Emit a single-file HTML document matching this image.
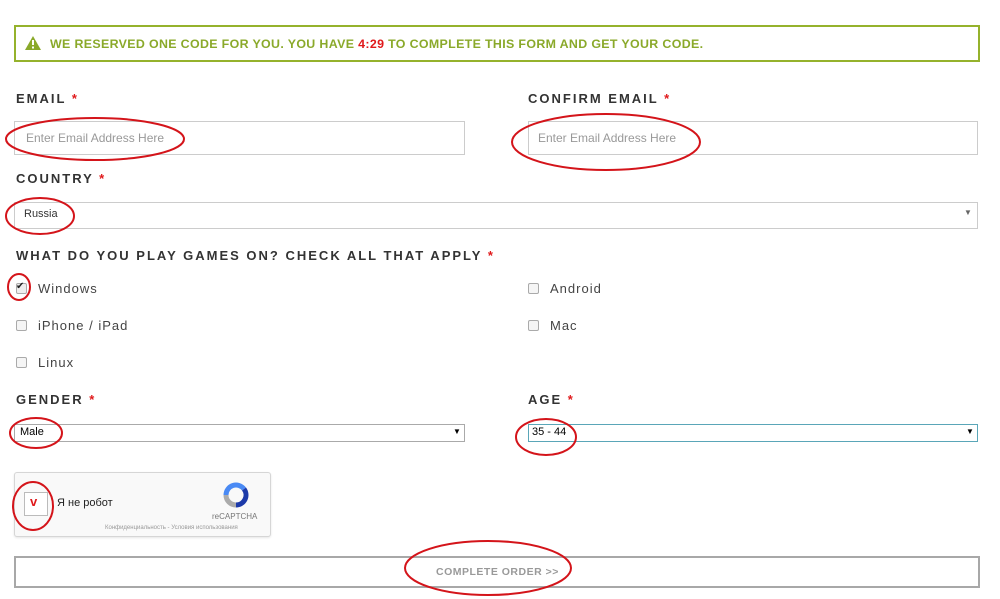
<!DOCTYPE html>
<html><head><meta charset="utf-8"><style>
body{margin:0;width:1000px;height:599px;background:#fff;font-family:"Liberation Sans","Noto Sans CJK SC",sans-serif;position:relative;overflow:hidden}
.a{position:absolute}
.banner{left:14px;top:25px;width:962px;height:33px;border:2px solid #95b22c}
.btext{left:50px;top:37px;font-size:12.4px;font-weight:bold;color:#8aa92a;letter-spacing:.35px}
.lbl{font-size:13px;font-weight:bold;color:#333;letter-spacing:2px}
.lbl span{color:#e0191b}
.inp{border:1px solid #ccc;background:#fff;box-sizing:border-box}
.ph{font-size:12px;color:#999}
.cb{width:9px;height:9px;border:1px solid #aaa;border-radius:2px;background:#f5f5f5}
.cl{font-size:13px;color:#444;letter-spacing:1px}
.sel{border:1px solid #aaa;box-sizing:border-box;font-size:11px;color:#222}
</style></head><body>
<div class="a banner"></div>
<svg class="a" style="left:25px;top:36px" width="16" height="14"><path d="M8 0L16 14H0Z" fill="#8aa92a"/><rect x="7" y="4" width="2" height="5" fill="#fff"/><rect x="7" y="10.5" width="2" height="2" fill="#fff"/></svg>
<div class="a btext">WE RESERVED ONE CODE FOR YOU. YOU HAVE <span style="color:#e0191b">4:29</span> TO COMPLETE THIS FORM AND GET YOUR CODE.</div>

<div class="a lbl" style="left:16px;top:91px">EMAIL <span>*</span></div>
<div class="a lbl" style="left:528px;top:91px">CONFIRM EMAIL <span>*</span></div>
<div class="a inp" style="left:14px;top:121px;width:451px;height:34px"></div>
<div class="a ph" style="left:26px;top:131px">Enter Email Address Here</div>
<div class="a inp" style="left:528px;top:121px;width:450px;height:34px"></div>
<div class="a ph" style="left:538px;top:131px">Enter Email Address Here</div>

<div class="a lbl" style="left:16px;top:171px">COUNTRY <span>*</span></div>
<div class="a inp" style="left:14px;top:202px;width:964px;height:27px"></div>
<div class="a" style="left:24px;top:208px;font-size:11px;color:#333">Russia</div>
<div class="a" style="left:964px;top:208px;font-size:8px;color:#666">▼</div>

<div class="a lbl" style="left:16px;top:248px">WHAT DO YOU PLAY GAMES ON? CHECK ALL THAT APPLY <span>*</span></div>
<div class="a cb" style="left:16px;top:283px;background:#eee"></div>
<div class="a" style="left:16px;top:281px;font-size:10px;line-height:12px;color:#222">✔</div>
<div class="a cl" style="left:38px;top:281px">Windows</div>
<div class="a cb" style="left:16px;top:320px"></div><div class="a cl" style="left:38px;top:318px">iPhone / iPad</div>
<div class="a cb" style="left:16px;top:357px"></div><div class="a cl" style="left:38px;top:355px">Linux</div>
<div class="a cb" style="left:528px;top:283px"></div><div class="a cl" style="left:550px;top:281px">Android</div>
<div class="a cb" style="left:528px;top:320px"></div><div class="a cl" style="left:550px;top:318px">Mac</div>

<div class="a lbl" style="left:16px;top:392px">GENDER <span>*</span></div>
<div class="a lbl" style="left:528px;top:392px">AGE <span>*</span></div>
<div class="a sel" style="left:14px;top:424px;width:451px;height:18px"></div>
<div class="a" style="left:20px;top:426px;font-size:11px">Male</div>
<div class="a" style="left:453px;top:427px;font-size:8px">▼</div>
<div class="a sel" style="left:528px;top:424px;width:450px;height:18px;border-color:#5aa6b8"></div>
<div class="a" style="left:532px;top:426px;font-size:11px">35 - 44</div>
<div class="a" style="left:966px;top:427px;font-size:8px">▼</div>

<div class="a" style="left:14px;top:472px;width:255px;height:63px;border:1px solid #d6d6d6;border-radius:3px;background:#f9f9f9;box-shadow:0 1px 2px rgba(0,0,0,.1)"></div>
<div class="a" style="left:24px;top:492px;width:22px;height:22px;border:1px solid #bbb;background:#fff"></div>
<div class="a" style="left:30px;top:494px;font-size:13px;font-weight:bold;color:#e0191b">v</div>
<div class="a" style="left:57px;top:497px;font-size:11px;color:#222">Я не робот</div>
<svg class="a" style="left:222px;top:482px" width="28" height="26"><path d="M4 13A10 10 0 0 1 22 7" stroke="#4a8af4" stroke-width="5" fill="none"/><path d="M22 7A10 10 0 0 1 14 23" stroke="#1c3aa9" stroke-width="5" fill="none"/><path d="M14 23A10 10 0 0 1 4 13" stroke="#ababab" stroke-width="5" fill="none"/></svg>
<div class="a" style="left:212px;top:512px;font-size:8px;color:#777">reCAPTCHA</div>
<div class="a" style="left:105px;top:525px;font-size:6px;color:#999">Конфиденциальность - Условия использования</div>

<div class="a" style="left:14px;top:556px;width:962px;height:28px;border:2px solid #a8a8a8"></div>
<div class="a" style="left:436px;top:566px;font-size:10.5px;font-weight:bold;color:#999;letter-spacing:.5px">COMPLETE ORDER &gt;&gt;</div>

<svg class="a" style="left:0;top:0" width="1000" height="599"><g fill="none" stroke="#d4141a" stroke-width="2">
<ellipse cx="95" cy="139" rx="89" ry="21"/>
<ellipse cx="606" cy="142" rx="94" ry="28"/>
<ellipse cx="40" cy="216" rx="34" ry="18"/>
<ellipse cx="19" cy="287" rx="11" ry="13"/>
<ellipse cx="36" cy="433" rx="26" ry="15"/>
<ellipse cx="546" cy="437" rx="30" ry="18"/>
<ellipse cx="33" cy="506" rx="20" ry="24"/>
<ellipse cx="488" cy="568" rx="83" ry="27"/>
</g></svg>
</body></html>
